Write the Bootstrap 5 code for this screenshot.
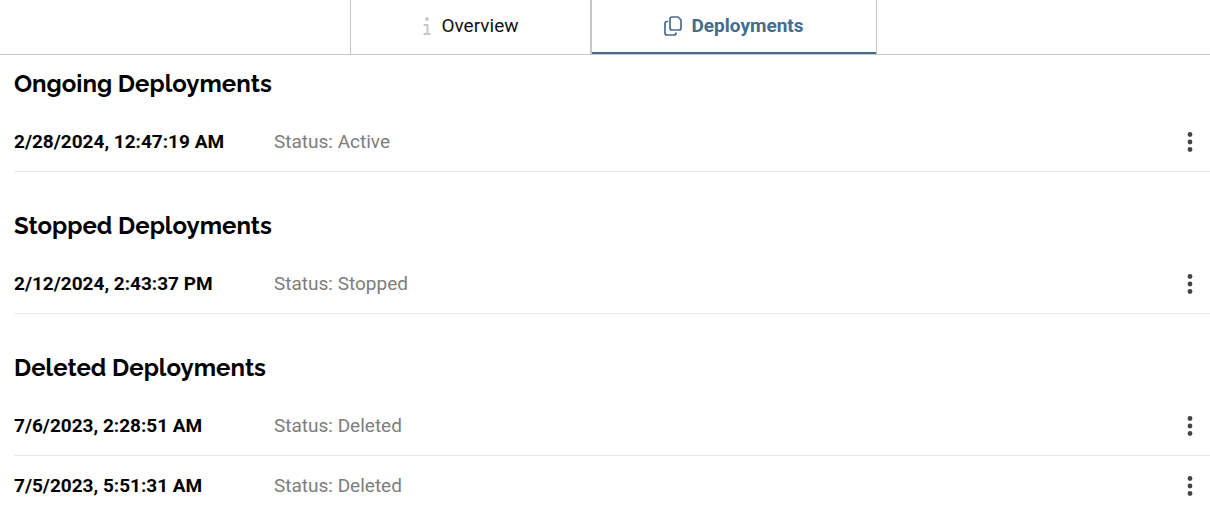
<!DOCTYPE html>
<html lang="en">
<head>
<meta charset="utf-8">
<meta name="viewport" content="width=device-width, initial-scale=1">
<title>Deployments</title>
<link href="https://cdn.jsdelivr.net/npm/bootstrap@5.3.0/dist/css/bootstrap.min.css" rel="stylesheet">
<style>
body { font-family: Roboto, sans-serif; font-size: 19px; line-height: 24px; color: #000; background: #fff; }
.tabbar { border-bottom: 1px solid #c6c6c6; padding-left: 17px; }
.tabbar .nav-link { height: 54px; padding: 0 72px 3px; gap: 9px; color: #111; border: solid #c6c6c6; border-width: 0 1px; border-radius: 0; }
.tabbar .nav-link.active { color: #456b8d; font-weight: 700; box-shadow: inset 0 -2px #456b8d; }
.tab-info { color: #c8c8c8; }
.content { padding: 14px 0 0 14px; }
.group { margin-bottom: 39px; }
.group-title { font-family: Raleway, Lato, sans-serif; font-size: 24px; line-height: 30px; font-weight: 700; margin-bottom: 13px; }
.deploy-row { height: 60px; border-bottom: 1px solid #e8e8eb; }
.group:last-child { margin-bottom: 0; }
.group:last-child .deploy-row:last-child { border-bottom-color: transparent; }
.when { width: 260px; font-weight: 700; }
.state { color: #7d7d7d; }
.menu-btn { width: 40px; height: 40px; color: #444; }
</style>
</head>
<body>
<nav class="nav tabbar justify-content-center flex-nowrap" aria-label="Sections">
  <a class="nav-link d-flex align-items-center" href="#overview">
    <svg class="tab-info" width="9" height="18" viewBox="0 0 9 18" fill="none" stroke="currentColor" stroke-width="2" aria-hidden="true"><circle cx="4" cy="2" r="1.900" fill="currentColor" stroke="none"/><path d="M0.500 8h4v8M0.500 17h7"/></svg>
    Overview
  </a>
  <a class="nav-link active d-flex align-items-center" href="#deployments" aria-current="page">
    <svg width="18" height="20" viewBox="0 0 18 20" fill="none" stroke="currentColor" stroke-width="1.700" stroke-linejoin="round" stroke-linecap="round" aria-hidden="true"><path d="M8 1h6L17 4V12q0 2-2 2H8q-2 0-2-2V3q0-2 2-2zM3.500 5.500H3q-2 0-2 2V17q0 2 2 2h7q2 0 2-2"/></svg>
    Deployments
  </a>
</nav>

<main class="content">
  <section class="group">
    <h2 class="group-title">Ongoing Deployments</h2>
    <div class="deploy-row d-flex align-items-center">
      <span class="when flex-shrink-0">2/28/2024, 12:47:19 AM</span>
      <span class="state">Status: Active</span>
      <button type="button" class="menu-btn btn p-0 border-0 ms-auto d-flex align-items-center justify-content-center" aria-label="Deployment actions"><svg width="6" height="20" viewBox="0 0 6 20" fill="currentColor" aria-hidden="true"><circle cx="3" cy="2.500" r="2.400"/><circle cx="3" cy="10" r="2.400"/><circle cx="3" cy="17.500" r="2.400"/></svg></button>
    </div>
  </section>

  <section class="group">
    <h2 class="group-title">Stopped Deployments</h2>
    <div class="deploy-row d-flex align-items-center">
      <span class="when flex-shrink-0">2/12/2024, 2:43:37 PM</span>
      <span class="state">Status: Stopped</span>
      <button type="button" class="menu-btn btn p-0 border-0 ms-auto d-flex align-items-center justify-content-center" aria-label="Deployment actions"><svg width="6" height="20" viewBox="0 0 6 20" fill="currentColor" aria-hidden="true"><circle cx="3" cy="2.500" r="2.400"/><circle cx="3" cy="10" r="2.400"/><circle cx="3" cy="17.500" r="2.400"/></svg></button>
    </div>
  </section>

  <section class="group">
    <h2 class="group-title">Deleted Deployments</h2>
    <div class="deploy-row d-flex align-items-center">
      <span class="when flex-shrink-0">7/6/2023, 2:28:51 AM</span>
      <span class="state">Status: Deleted</span>
      <button type="button" class="menu-btn btn p-0 border-0 ms-auto d-flex align-items-center justify-content-center" aria-label="Deployment actions"><svg width="6" height="20" viewBox="0 0 6 20" fill="currentColor" aria-hidden="true"><circle cx="3" cy="2.500" r="2.400"/><circle cx="3" cy="10" r="2.400"/><circle cx="3" cy="17.500" r="2.400"/></svg></button>
    </div>
    <div class="deploy-row d-flex align-items-center">
      <span class="when flex-shrink-0">7/5/2023, 5:51:31 AM</span>
      <span class="state">Status: Deleted</span>
      <button type="button" class="menu-btn btn p-0 border-0 ms-auto d-flex align-items-center justify-content-center" aria-label="Deployment actions"><svg width="6" height="20" viewBox="0 0 6 20" fill="currentColor" aria-hidden="true"><circle cx="3" cy="2.500" r="2.400"/><circle cx="3" cy="10" r="2.400"/><circle cx="3" cy="17.500" r="2.400"/></svg></button>
    </div>
  </section>
</main>
<script src="https://cdn.jsdelivr.net/npm/bootstrap@5.3.0/dist/js/bootstrap.bundle.min.js"></script>
</body>
</html>
